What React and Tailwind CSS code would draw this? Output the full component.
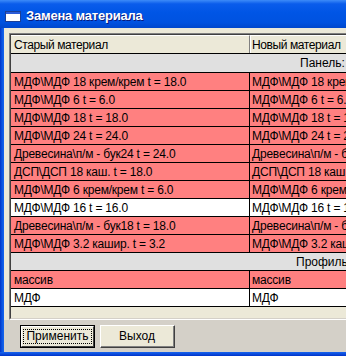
import React from 'react';

const oldRows = [
  { text: 'МДФ\\МДФ 18 крем/крем t = 18.0', red: true },
  { text: 'МДФ\\МДФ 6 t = 6.0', red: true },
  { text: 'МДФ\\МДФ 18 t = 18.0', red: true },
  { text: 'МДФ\\МДФ 24 t = 24.0', red: true },
  { text: 'Древесина\\п/м - бук24 t = 24.0', red: true },
  { text: 'ДСП\\ДСП 18 каш. t = 18.0', red: true },
  { text: 'МДФ\\МДФ 6 крем/крем t = 6.0', red: true },
  { text: 'МДФ\\МДФ 16 t = 16.0', red: false },
  { text: 'Древесина\\п/м - бук18 t = 18.0', red: true },
  { text: 'МДФ\\МДФ 3.2 кашир. t = 3.2', red: true },
];

const profileRows = [
  { text: 'массив', red: true },
  { text: 'МДФ', red: false },
];

function Row({ text, red }) {
  return (
    <div className={`flex h-[18px] border-b border-black tracking-[-0.2px] ${red ? 'bg-[#FF8080]' : 'bg-white'}`}>
      <div className="w-[239px] shrink-0 border-r border-black pl-[3px] pt-[1px] leading-[16px] whitespace-nowrap overflow-hidden">
        {text}
      </div>
      <div className="w-[239px] shrink-0 border-r border-black pl-[2px] pt-[1px] leading-[16px] whitespace-nowrap overflow-hidden">
        {text}
      </div>
    </div>
  );
}

export default function App() {
  return (
    <div className="w-[346px] h-[356px] overflow-hidden flex flex-col text-[12px] text-black font-['Liberation_Sans',Arial,sans-serif]">
      {/* title bar */}
      <div className="h-[28px] shrink-0 flex items-center pt-[3px] bg-[linear-gradient(to_bottom,#3D8BF8_0%,#0A5CEB_14%,#0055E5_45%,#0052E0_80%,#0047CC_100%)]">
        <svg width="16" height="16" viewBox="0 0 16 16" className="ml-[5px]">
          <rect x="0.5" y="3.5" width="15" height="10" fill="#FFFFFF" stroke="#1C3F95" />
          <rect x="1" y="4" width="14" height="2" fill="#2B5CD8" />
        </svg>
        <span className="ml-[5px] text-white font-bold text-[13px] tracking-[-0.2px] [text-shadow:1px_1px_0_#0A1A7A]">
          Замена материала
        </span>
      </div>

      <div className="flex flex-1 min-h-0">
        {/* left frame */}
        <div className="w-[4px] shrink-0 bg-[linear-gradient(to_right,#0033C8,#0A55E0_50%,#1664EE)]" />

        <div className="flex-1 flex flex-col min-w-0">
          {/* grid panel */}
          <div className="h-[292px] bg-[#ECE9D8] pl-[5px] pt-[5px] overflow-hidden">
            <div className="w-[600px] h-[287px] border-t border-l border-b border-t-[#808080] border-l-[#808080] border-b-white">
              <div className="h-full border-t border-l border-b border-t-[#404040] border-l-[#404040] border-b-[#D4D0C8] flex flex-col">
                {/* header */}
                <div className="flex h-[19px] border-b border-black bg-[#ECE9D8] tracking-[-0.4px]">
                  <div className="w-[239px] shrink-0 border-r border-[#808080] border-t border-t-white pl-[3px] pt-[1px] leading-[16px] whitespace-nowrap">
                    Старый материал
                  </div>
                  <div className="w-[239px] shrink-0 border-l border-l-white border-t border-t-white border-r border-r-[#808080] pl-[1px] pt-[1px] leading-[16px] whitespace-nowrap">
                    Новый материал
                  </div>
                </div>
                <div className="h-[19px] border-b border-black bg-[#E0E0E0] pt-[1px] leading-[17px] whitespace-nowrap pl-[289px]">
                  Панель: Плита
                </div>
                {oldRows.map((r, i) => (
                  <Row key={i} text={r.text} red={r.red} />
                ))}
                <div className="h-[18px] border-b border-black bg-[#E0E0E0] pt-[1px] leading-[16px] whitespace-nowrap pl-[285px]">
                  Профиль:
                </div>
                {profileRows.map((r, i) => (
                  <Row key={i} text={r.text} red={r.red} />
                ))}
                <div className="flex-1 bg-[#ECE9D8]" />
              </div>
            </div>
          </div>

          {/* button panel */}
          <div className="flex-1 bg-[#D4D0C8] flex gap-[5px] pl-[16px] pt-[5px]">
            <button className="w-[75px] h-[23px] border border-black bg-[#ECE9D8] p-0">
              <div className="h-full border-t border-l border-white border-r border-b border-r-[#404040] border-b-[#404040] flex items-center justify-center">
                <span className="border border-dotted border-black px-[2px] leading-[13px]">Применить</span>
              </div>
            </button>
            <button className="w-[75px] h-[23px] bg-[#ECE9D8] border-t border-l border-t-white border-l-white border-r border-b border-r-[#404040] border-b-[#404040] p-0">
              <div className="h-full border-r border-b border-r-[#808080] border-b-[#808080] flex items-center justify-center">
                Выход
              </div>
            </button>
          </div>
        </div>
      </div>

      {/* bottom frame */}
      <div className="h-[4px] shrink-0 bg-[linear-gradient(to_bottom,#1664EE,#0033C8)]" />
    </div>
  );
}
